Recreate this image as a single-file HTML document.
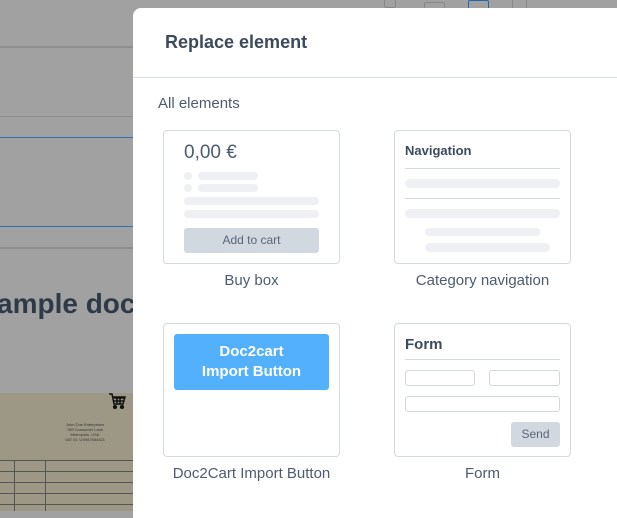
<!DOCTYPE html>
<html><head><style>
*{box-sizing:border-box;margin:0;padding:0}
body{width:617px;height:511px;overflow:hidden;background:#a1a1a1;font-family:"Liberation Sans",sans-serif;position:relative}
.a{position:absolute}
.bar{background:#eef0f4;border-radius:5px;position:absolute}
.card{position:absolute;border:1px solid #d3dae3;border-radius:4px;background:#fff}
.lbl{position:absolute;width:177px;text-align:center;font-size:15px;color:#4d5b6e}
.in{position:absolute;border:1px solid #cfd7e0;border-radius:3px;height:16px}
</style></head><body>
<div class="a" style="left:0;top:46px;width:134px;height:2px;background:#8e8e8e"></div>
<div class="a" style="left:0;top:116px;width:134px;height:1px;background:#8e8e8e"></div>
<div class="a" style="left:0;top:137px;width:134px;height:1px;background:#2f6fae"></div>
<div class="a" style="left:0;top:226px;width:134px;height:1px;background:#2f6fae"></div>
<div class="a" style="left:0;top:247px;width:134px;height:2px;background:#8e8e8e"></div>
<div class="a" style="left:-3px;top:288px;font-size:28px;font-weight:bold;color:#2e3a48;white-space:nowrap">ample document</div>
<div class="a" style="left:0;top:393px;width:134px;height:118px;background:#9d9886"></div>
<svg class="a" style="left:108px;top:392px" width="18" height="18" viewBox="0 0 18 18" fill="none" stroke="#111" stroke-width="1.5"><path d="M1 2h3l2 10h9l2-7H5"/><path d="M6 6h10M6 9h10M9 5v7M12 5v7"/><circle cx="7" cy="15" r="1.3" fill="#111"/><circle cx="14" cy="15" r="1.3" fill="#111"/></svg>
<div class="a" style="left:50px;top:422px;width:70px;font-size:4px;line-height:5px;color:#333;text-align:center">John Doe Enterprises<br>789 Consumer Lane<br>Metropolis, USA<br>VAT ID: US987654321</div>
<div class="a" style="left:0;top:460px;width:134px;height:51px;border-top:1px solid #555;background:repeating-linear-gradient(#9d9886 0 10px,#555 10px 11px)"></div>
<div class="a" style="left:14px;top:460px;width:1px;height:51px;background:#555"></div>
<div class="a" style="left:45px;top:460px;width:1px;height:51px;background:#555"></div>
<div class="a" style="left:384px;top:-6px;width:12px;height:14px;border:1.5px solid #888;border-radius:2px"></div>
<div class="a" style="left:424px;top:2px;width:21px;height:10px;border:1.5px solid #888;border-radius:2px"></div>
<div class="a" style="left:468px;top:0px;width:21px;height:12px;border:1.5px solid #2b63a8;border-radius:2px"></div>
<div class="a" style="left:512px;top:-2px;width:15px;height:12px;border:1.5px solid #888;border-radius:2px"></div>

<div class="a" style="left:133px;top:8px;width:490px;height:510px;background:#fff;border-radius:8px 0 0 0">
 <div class="a" style="left:32px;top:24px;font-size:18px;font-weight:bold;color:#3d4a5c">Replace element</div>
 <div class="a" style="left:0;top:69px;width:490px;height:1px;background:#d7dee6"></div>
 <div class="a" style="left:25px;top:87px;font-size:15px;color:#4d5b6e">All elements</div>

 <div class="card" style="left:30px;top:122px;width:177px;height:134px">
  <div class="a" style="left:20px;top:11px;font-size:19px;color:#4d5b6e">0,00 €</div>
  <div class="bar" style="left:20px;top:41px;width:8px;height:8px"></div>
  <div class="bar" style="left:34px;top:41px;width:60px;height:8px"></div>
  <div class="bar" style="left:20px;top:53px;width:8px;height:8px"></div>
  <div class="bar" style="left:34px;top:53px;width:60px;height:8px"></div>
  <div class="bar" style="left:20px;top:66px;width:135px;height:8px"></div>
  <div class="bar" style="left:20px;top:79px;width:135px;height:8px"></div>
  <div class="a" style="left:20px;top:97px;width:135px;height:25px;background:#d1d8e0;border-radius:3px;font-size:12px;color:#5a6678;text-align:center;line-height:25px">Add to cart</div>
 </div>
 <div class="lbl" style="left:30px;top:264px">Buy box</div>

 <div class="card" style="left:261px;top:122px;width:177px;height:134px">
  <div class="a" style="left:10px;top:12px;font-size:13px;font-weight:bold;color:#3d4a5c">Navigation</div>
  <div class="a" style="left:10px;top:37px;width:155px;height:1px;background:#d3dae3"></div>
  <div class="bar" style="left:10px;top:48px;width:155px;height:9px"></div>
  <div class="a" style="left:10px;top:67px;width:155px;height:1px;background:#d3dae3"></div>
  <div class="bar" style="left:10px;top:78px;width:155px;height:9px"></div>
  <div class="bar" style="left:30px;top:97px;width:115px;height:8px"></div>
  <div class="bar" style="left:30px;top:112px;width:125px;height:9px"></div>
 </div>
 <div class="lbl" style="left:261px;top:264px">Category navigation</div>

 <div class="card" style="left:30px;top:315px;width:177px;height:134px">
  <div class="a" style="left:10px;top:10px;width:155px;height:56px;background:#53b0fc;border-radius:3px;color:#fff;font-weight:bold;font-size:15px;text-align:center;line-height:20px;padding-top:8px">Doc2cart<br>Import Button</div>
 </div>
 <div class="lbl" style="left:22px;top:457px;width:193px">Doc2Cart Import Button</div>

 <div class="card" style="left:261px;top:315px;width:177px;height:134px">
  <div class="a" style="left:10px;top:12px;font-size:15px;font-weight:bold;color:#3d4a5c">Form</div>
  <div class="a" style="left:10px;top:35px;width:155px;height:1px;background:#d3dae3"></div>
  <div class="in" style="left:10px;top:46px;width:70px"></div>
  <div class="in" style="left:94px;top:46px;width:71px"></div>
  <div class="in" style="left:10px;top:72px;width:155px"></div>
  <div class="a" style="left:116px;top:98px;width:49px;height:25px;background:#d1d8e0;border-radius:3px;font-size:12px;color:#5a6678;text-align:center;line-height:25px">Send</div>
 </div>
 <div class="lbl" style="left:261px;top:457px">Form</div>
</div>
</body></html>
